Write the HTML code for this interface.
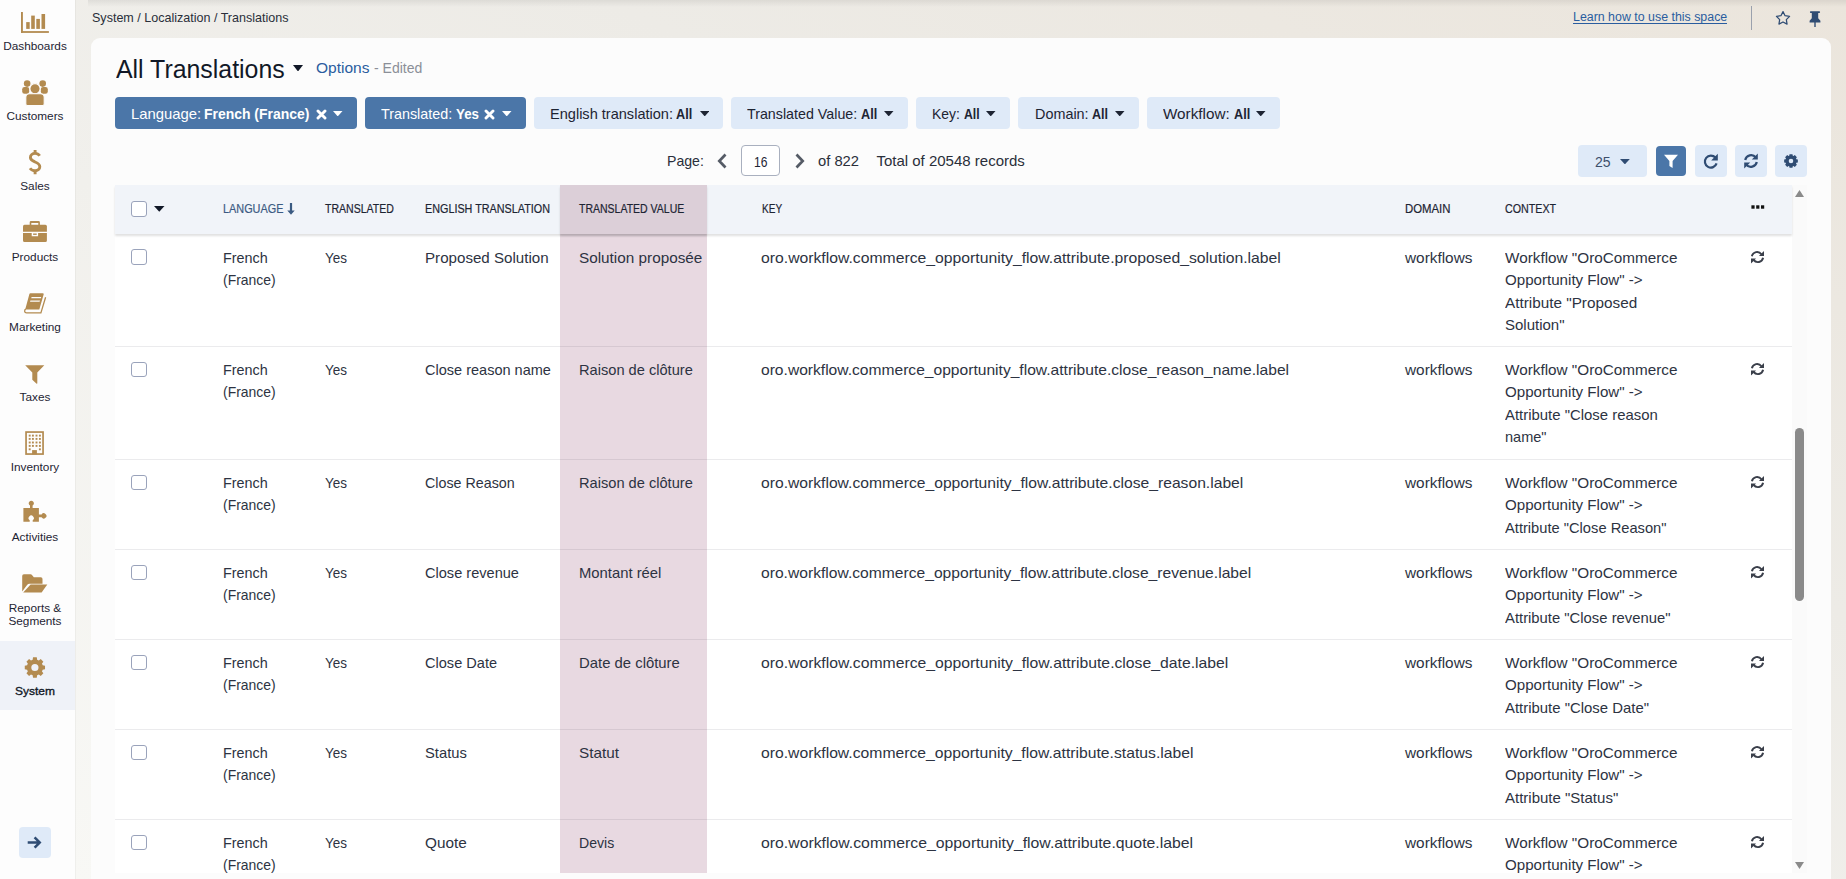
<!DOCTYPE html>
<html><head><meta charset="utf-8">
<style>
*{box-sizing:border-box;margin:0;padding:0}
html,body{width:1846px;height:879px;overflow:hidden}
body{font-family:"Liberation Sans",sans-serif;color:#1d2433;background:#efedea;position:relative}
.abs{position:absolute}
.t{position:absolute;white-space:nowrap;transform-origin:0 0;color:#2d3342}
#side{left:0;top:0;width:75px;height:879px;background:#fdfdfd}
#topbg{left:75px;top:0;width:1771px;height:879px;background:linear-gradient(to bottom left,#ebe5dc 0%,#edebe6 35%,#f1f0ec 60%,#f8f8f5 100%)}
#topshadow{left:88px;top:0;width:1758px;height:7px;background:linear-gradient(180deg,rgba(0,0,0,.07),rgba(0,0,0,0))}
#card{left:91px;top:38px;width:1740px;height:860px;background:#fcfcfc;border-radius:9px}
#thead{left:115px;top:185px;width:1677px;height:48.5px;background:#f1f4f9;box-shadow:0 2px 2px rgba(0,0,0,.12)}

</style></head><body>
<div id="topbg" class="abs"></div><div id="topshadow" class="abs"></div>
<div id="card" class="abs"></div>
<div class="t" style="left:115.60px;top:56.00px;font-size:26px;line-height:26px;transform:scaleX(0.9570);color:#111827">All Translations</div>
<svg class="abs" style="left:293px;top:64.5px" width="10" height="6.5" viewBox="0 0 10 6.5"><path fill="#111827" d="M0 0 H10 L5.0 6.5 Z"/></svg>
<div class="t" style="left:315.50px;top:60.55px;font-size:14.5px;line-height:14.5px;transform:scaleX(1.0710);color:#2a5d9f">Options</div>
<div class="t" style="left:373.50px;top:60.55px;font-size:14.5px;line-height:14.5px;transform:scaleX(0.9669);color:#8b8f98">- Edited</div>
<div class="abs" style="left:115.2px;top:97px;width:241.4px;height:31.6px;border-radius:4px;background:#4b76a8"></div>
<div class="t" style="left:131.20px;top:105.80px;font-size:15px;line-height:15px;transform:scaleX(0.9905);color:#ffffff">Language:</div>
<div class="t" style="left:204.30px;top:105.80px;font-size:15px;line-height:15px;transform:scaleX(0.9292);font-weight:bold;color:#ffffff">French (France)</div>
<svg class="abs" style="left:315.5px;top:108.5px" width="11" height="11" viewBox="0 0 11 11"><path stroke="#fff" stroke-width="2.9" stroke-linecap="round" d="M2 2 L9 9 M9 2 L2 9"/></svg>
<svg class="abs" style="left:333px;top:110.7px" width="9.5" height="5.4" viewBox="0 0 9.5 5.4"><path fill="#ffffff" d="M0 0 H9.5 L4.75 5.4 Z"/></svg>
<div class="abs" style="left:365.1px;top:97px;width:160.7px;height:31.6px;border-radius:4px;background:#4b76a8"></div>
<div class="t" style="left:381.00px;top:105.80px;font-size:15px;line-height:15px;transform:scaleX(0.9547);color:#ffffff">Translated:</div>
<div class="t" style="left:456.00px;top:105.80px;font-size:15px;line-height:15px;transform:scaleX(0.8889);font-weight:bold;color:#ffffff">Yes</div>
<svg class="abs" style="left:483.8px;top:108.5px" width="11" height="11" viewBox="0 0 11 11"><path stroke="#fff" stroke-width="2.9" stroke-linecap="round" d="M2 2 L9 9 M9 2 L2 9"/></svg>
<svg class="abs" style="left:502.4px;top:110.7px" width="9.5" height="5.4" viewBox="0 0 9.5 5.4"><path fill="#ffffff" d="M0 0 H9.5 L4.75 5.4 Z"/></svg>
<div class="abs" style="left:534.1px;top:97px;width:188.7px;height:31.6px;border-radius:4px;background:#dfeaf8"></div>
<div class="t" style="left:550.00px;top:105.80px;font-size:15px;line-height:15px;transform:scaleX(0.9704);color:#1d2433">English translation:</div>
<div class="t" style="left:676.30px;top:105.80px;font-size:15px;line-height:15px;transform:scaleX(0.8438);font-weight:bold;color:#1d2433">All</div>
<svg class="abs" style="left:699.6px;top:110.7px" width="9.5" height="5.4" viewBox="0 0 9.5 5.4"><path fill="#1d2433" d="M0 0 H9.5 L4.75 5.4 Z"/></svg>
<div class="abs" style="left:731px;top:97px;width:176.9px;height:31.6px;border-radius:4px;background:#dfeaf8"></div>
<div class="t" style="left:747.20px;top:105.80px;font-size:15px;line-height:15px;transform:scaleX(0.9510);color:#1d2433">Translated Value:</div>
<div class="t" style="left:861.00px;top:105.80px;font-size:15px;line-height:15px;transform:scaleX(0.8438);font-weight:bold;color:#1d2433">All</div>
<svg class="abs" style="left:884px;top:110.7px" width="9.5" height="5.4" viewBox="0 0 9.5 5.4"><path fill="#1d2433" d="M0 0 H9.5 L4.75 5.4 Z"/></svg>
<div class="abs" style="left:916px;top:97px;width:93.7px;height:31.6px;border-radius:4px;background:#dfeaf8"></div>
<div class="t" style="left:932.20px;top:105.80px;font-size:15px;line-height:15px;transform:scaleX(0.9267);color:#1d2433">Key:</div>
<div class="t" style="left:963.60px;top:105.80px;font-size:15px;line-height:15px;transform:scaleX(0.8177);font-weight:bold;color:#1d2433">All</div>
<svg class="abs" style="left:986.4px;top:110.7px" width="9.5" height="5.4" viewBox="0 0 9.5 5.4"><path fill="#1d2433" d="M0 0 H9.5 L4.75 5.4 Z"/></svg>
<div class="abs" style="left:1018.1px;top:97px;width:120.7px;height:31.6px;border-radius:4px;background:#dfeaf8"></div>
<div class="t" style="left:1034.60px;top:105.80px;font-size:15px;line-height:15px;transform:scaleX(0.9593);color:#1d2433">Domain:</div>
<div class="t" style="left:1092.00px;top:105.80px;font-size:15px;line-height:15px;transform:scaleX(0.8385);font-weight:bold;color:#1d2433">All</div>
<svg class="abs" style="left:1115.2px;top:110.7px" width="9.5" height="5.4" viewBox="0 0 9.5 5.4"><path fill="#1d2433" d="M0 0 H9.5 L4.75 5.4 Z"/></svg>
<div class="abs" style="left:1147.1px;top:97px;width:132.7px;height:31.6px;border-radius:4px;background:#dfeaf8"></div>
<div class="t" style="left:1163.40px;top:105.80px;font-size:15px;line-height:15px;transform:scaleX(1.0160);color:#1d2433">Workflow:</div>
<div class="t" style="left:1233.80px;top:105.80px;font-size:15px;line-height:15px;transform:scaleX(0.8438);font-weight:bold;color:#1d2433">All</div>
<svg class="abs" style="left:1256px;top:110.7px" width="9.5" height="5.4" viewBox="0 0 9.5 5.4"><path fill="#1d2433" d="M0 0 H9.5 L4.75 5.4 Z"/></svg>
<div class="t" style="left:667.30px;top:153.40px;font-size:15px;line-height:15px;transform:scaleX(0.9407);color:#2a2f3a">Page:</div>
<svg class="abs" style="left:715px;top:153px" width="14" height="16" viewBox="0 0 14 16"><path fill="none" stroke="#555b66" stroke-width="2.7" d="M10.5 1.5 l-6.2 6.5 6.2 6.5"/></svg>
<div class="abs" style="left:741.4px;top:145.4px;width:39px;height:31px;border:1px solid #a9b0bf;border-radius:4px;background:#fff"></div>
<div class="t" style="left:754.00px;top:153.60px;font-size:15px;line-height:15px;transform:scaleX(0.8048);color:#1d2433">16</div>
<svg class="abs" style="left:793px;top:153px" width="14" height="16" viewBox="0 0 14 16"><path fill="none" stroke="#555b66" stroke-width="2.7" d="M3.5 1.5 l6.2 6.5 -6.2 6.5"/></svg>
<div class="t" style="left:818.00px;top:153.40px;font-size:15px;line-height:15px;transform:scaleX(0.9832);color:#2a2f3a">of 822</div>
<div class="t" style="left:876.40px;top:153.40px;font-size:15px;line-height:15px;color:#2a2f3a">Total of 20548 records</div>
<div class="abs" style="left:1578.2px;top:145.2px;width:68.5px;height:31.4px;border-radius:4px;background:#dfeaf8"></div>
<div class="t" style="left:1595.40px;top:153.60px;font-size:15px;line-height:15px;transform:scaleX(0.9369);color:#3d4f6b">25</div>
<svg class="abs" style="left:1620px;top:159px" width="9.8" height="5.4" viewBox="0 0 9.8 5.4"><path fill="#2f4c73" d="M0 0 H9.8 L4.9 5.4 Z"/></svg>
<div class="abs" style="left:1656px;top:145.9px;width:30px;height:29.8px;border-radius:4px;background:#4b76a8"></div>
<svg class="abs" style="left:1661px;top:151px" width="20" height="20" viewBox="0 0 20 20"><path fill="#fff" d="M3 3.8 h14 l-5.4 6.2 v7 l-3.2 -2 v-5z"/></svg>
<div class="abs" style="left:1695px;top:145.2px;width:32px;height:31.4px;border-radius:4px;background:#dfeaf8"></div>
<div class="abs" style="left:1735px;top:145.2px;width:32px;height:31.4px;border-radius:4px;background:#dfeaf8"></div>
<div class="abs" style="left:1775px;top:145.2px;width:32px;height:31.4px;border-radius:4px;background:#dfeaf8"></div>
<svg class="abs" style="left:1702px;top:152px" width="18" height="18" viewBox="0 0 18 18"><path fill="none" stroke="#2f4c73" stroke-width="2.2" d="M13.4 5.6 A6 6 0 1 0 14.6 11.4"/><path fill="#2f4c73" d="M15.8 1.8 v6.6 h-6.6z"/></svg>
<svg class="abs" style="left:1742px;top:152px" width="18" height="18" viewBox="0 0 18 18"><path fill="none" stroke="#2f4c73" stroke-width="2.2" d="M3.2 8 A6 6 0 0 1 13.8 5.5 M14.8 10 A6 6 0 0 1 4.2 12.5"/><path fill="#2f4c73" d="M15.8 1.5 v6 h-6z M2.2 16.5 v-6 h6z"/></svg>
<svg class="abs" style="left:1781px;top:151px" width="20" height="20" viewBox="0 0 20 20"><path fill="#2f4c73" fill-rule="evenodd" d="M15.31 8.21 L16.84 8.53 L16.84 11.47 L15.31 11.79 L15.02 12.49 L15.88 13.80 L13.80 15.88 L12.49 15.02 L11.79 15.31 L11.47 16.84 L8.53 16.84 L8.21 15.31 L7.51 15.02 L6.20 15.88 L4.12 13.80 L4.98 12.49 L4.69 11.79 L3.16 11.47 L3.16 8.53 L4.69 8.21 L4.98 7.51 L4.12 6.20 L6.20 4.12 L7.51 4.98 L8.21 4.69 L8.53 3.16 L11.47 3.16 L11.79 4.69 L12.49 4.98 L13.80 4.12 L15.88 6.20 L15.02 7.51 Z M7.70 10.00 a2.30 2.30 0 1 0 4.60 0 a2.30 2.30 0 1 0 -4.60 0 Z"/></svg>
<div class="abs" style="left:115px;top:233.5px;width:1677px;height:639.3px;background:#fff"></div>
<div class="abs" style="left:1792px;top:185px;width:15px;height:688px;background:#fafafa"></div>
<div class="abs" style="left:560px;top:233.5px;width:147px;height:639.3px;background:#e8d9e1"></div>
<div id="thead" class="abs"></div>
<div class="abs" style="left:560px;top:185px;width:147px;height:48.5px;background:#dccfd8;box-shadow:0 2px 2px rgba(0,0,0,.12)"></div>
<div class="abs" style="left:131.2px;top:201.2px;width:15.8px;height:15.6px;border:1.3px solid #9aa3bb;border-radius:3px;background:#fff"></div>
<svg class="abs" style="left:154.4px;top:206.3px" width="10.5" height="5.8" viewBox="0 0 10.5 5.8"><path fill="#111827" d="M0 0 H10.5 L5.25 5.8 Z"/></svg>
<div class="t" style="left:223.40px;top:203.10px;font-size:12.4px;line-height:12.4px;transform:scaleX(0.8769);color:#3b5a82;-webkit-text-stroke:0.2px #3b5a82">LANGUAGE</div>
<div class="t" style="left:325.00px;top:203.10px;font-size:12.4px;line-height:12.4px;transform:scaleX(0.8508);color:#1d2433;-webkit-text-stroke:0.2px #1d2433">TRANSLATED</div>
<div class="t" style="left:425.00px;top:203.10px;font-size:12.4px;line-height:12.4px;transform:scaleX(0.8709);color:#1d2433;-webkit-text-stroke:0.2px #1d2433">ENGLISH TRANSLATION</div>
<div class="t" style="left:578.90px;top:203.10px;font-size:12.4px;line-height:12.4px;transform:scaleX(0.8475);color:#1d2433;-webkit-text-stroke:0.2px #1d2433">TRANSLATED VALUE</div>
<div class="t" style="left:761.60px;top:203.10px;font-size:12.4px;line-height:12.4px;transform:scaleX(0.8105);color:#1d2433;-webkit-text-stroke:0.2px #1d2433">KEY</div>
<div class="t" style="left:1404.80px;top:203.10px;font-size:12.4px;line-height:12.4px;transform:scaleX(0.9173);color:#1d2433;-webkit-text-stroke:0.2px #1d2433">DOMAIN</div>
<div class="t" style="left:1504.90px;top:203.10px;font-size:12.4px;line-height:12.4px;transform:scaleX(0.8638);color:#1d2433;-webkit-text-stroke:0.2px #1d2433">CONTEXT</div>
<svg class="abs" style="left:286.5px;top:203px" width="8" height="12" viewBox="0 0 8 12"><path fill="#3b5a82" d="M2.9 0 h2.2 v7.5 h2.6 l-3.7 4.3 -3.7 -4.3 h2.6z"/></svg>
<svg class="abs" style="left:1750px;top:204px" width="16" height="7" viewBox="0 0 16 7"><g fill="#111"><rect x="1.4" y="1.3" width="3.2" height="3.4"/><rect x="6.2" y="1.3" width="3.2" height="3.4"/><rect x="11" y="1.3" width="3.2" height="3.4"/></g></svg>
<div class="abs" style="left:115px;top:346px;width:1677px;height:1px;background:rgba(40,40,60,.095)"></div>
<div class="abs" style="left:131.2px;top:249.1px;width:15.6px;height:15.6px;border:1.3px solid #9aa3bb;border-radius:3px;background:#fff"></div>
<div class="t" style="left:223.30px;top:249.90px;font-size:15px;line-height:15px;transform:scaleX(0.9582)">French</div>
<div class="t" style="left:223.30px;top:272.30px;font-size:15px;line-height:15px;transform:scaleX(0.9295)">(France)</div>
<div class="t" style="left:325.30px;top:249.90px;font-size:15px;line-height:15px;transform:scaleX(0.8998)">Yes</div>
<div class="t" style="left:425.30px;top:249.90px;font-size:15px;line-height:15px;transform:scaleX(1.0088)">Proposed Solution</div>
<div class="t" style="left:578.70px;top:249.90px;font-size:15px;line-height:15px;transform:scaleX(1.0199)">Solution proposée</div>
<div class="t" style="left:761.20px;top:249.90px;font-size:15px;line-height:15px;transform:scaleX(1.0495)">oro.workflow.commerce_opportunity_flow.attribute.proposed_solution.label</div>
<div class="t" style="left:1405.18px;top:249.90px;font-size:15px;line-height:15px;transform:scaleX(1.0239)">workflows</div>
<div class="t" style="left:1505.00px;top:249.90px;font-size:15px;line-height:15px;transform:scaleX(1.0191)">Workflow "OroCommerce</div>
<div class="t" style="left:1505.00px;top:272.30px;font-size:15px;line-height:15px;transform:scaleX(1.0077)">Opportunity Flow" -&gt;</div>
<div class="t" style="left:1505.00px;top:294.70px;font-size:15px;line-height:15px;transform:scaleX(1.0201)">Attribute "Proposed</div>
<div class="t" style="left:1505.00px;top:317.10px;font-size:15px;line-height:15px">Solution"</div>
<svg class="abs" style="left:1749px;top:248.5px" width="17" height="17" viewBox="0 0 17 17"><path fill="none" stroke="#3a3f4a" stroke-width="1.9" d="M2.9 7.3 A5.3 5.3 0 0 1 12.4 5.2 M14.1 8.8 A5.3 5.3 0 0 1 4.6 10.9"/><path fill="#3a3f4a" d="M15 1.9 V6.9 H10 L11.4 5.5z M2 14.5 V9.5 H7 L5.6 10.9z"/></svg>
<div class="abs" style="left:115px;top:459px;width:1677px;height:1px;background:rgba(40,40,60,.095)"></div>
<div class="abs" style="left:131.2px;top:361.6px;width:15.6px;height:15.6px;border:1.3px solid #9aa3bb;border-radius:3px;background:#fff"></div>
<div class="t" style="left:223.30px;top:361.70px;font-size:15px;line-height:15px;transform:scaleX(0.9582)">French</div>
<div class="t" style="left:223.30px;top:384.10px;font-size:15px;line-height:15px;transform:scaleX(0.9295)">(France)</div>
<div class="t" style="left:325.30px;top:361.70px;font-size:15px;line-height:15px;transform:scaleX(0.8998)">Yes</div>
<div class="t" style="left:425.30px;top:361.70px;font-size:15px;line-height:15px;transform:scaleX(0.9681)">Close reason name</div>
<div class="t" style="left:578.70px;top:361.70px;font-size:15px;line-height:15px;transform:scaleX(0.9751)">Raison de clôture</div>
<div class="t" style="left:761.20px;top:361.70px;font-size:15px;line-height:15px;transform:scaleX(1.0399)">oro.workflow.commerce_opportunity_flow.attribute.close_reason_name.label</div>
<div class="t" style="left:1405.18px;top:361.70px;font-size:15px;line-height:15px;transform:scaleX(1.0239)">workflows</div>
<div class="t" style="left:1505.00px;top:361.70px;font-size:15px;line-height:15px;transform:scaleX(1.0191)">Workflow "OroCommerce</div>
<div class="t" style="left:1505.00px;top:384.10px;font-size:15px;line-height:15px;transform:scaleX(1.0077)">Opportunity Flow" -&gt;</div>
<div class="t" style="left:1505.00px;top:406.50px;font-size:15px;line-height:15px;transform:scaleX(0.9938)">Attribute "Close reason</div>
<div class="t" style="left:1505.00px;top:428.90px;font-size:15px;line-height:15px;transform:scaleX(0.9691)">name"</div>
<svg class="abs" style="left:1749px;top:361px" width="17" height="17" viewBox="0 0 17 17"><path fill="none" stroke="#3a3f4a" stroke-width="1.9" d="M2.9 7.3 A5.3 5.3 0 0 1 12.4 5.2 M14.1 8.8 A5.3 5.3 0 0 1 4.6 10.9"/><path fill="#3a3f4a" d="M15 1.9 V6.9 H10 L11.4 5.5z M2 14.5 V9.5 H7 L5.6 10.9z"/></svg>
<div class="abs" style="left:115px;top:549px;width:1677px;height:1px;background:rgba(40,40,60,.095)"></div>
<div class="abs" style="left:131.2px;top:474.6px;width:15.6px;height:15.6px;border:1.3px solid #9aa3bb;border-radius:3px;background:#fff"></div>
<div class="t" style="left:223.30px;top:474.70px;font-size:15px;line-height:15px;transform:scaleX(0.9582)">French</div>
<div class="t" style="left:223.30px;top:497.10px;font-size:15px;line-height:15px;transform:scaleX(0.9295)">(France)</div>
<div class="t" style="left:325.30px;top:474.70px;font-size:15px;line-height:15px;transform:scaleX(0.8998)">Yes</div>
<div class="t" style="left:425.30px;top:474.70px;font-size:15px;line-height:15px;transform:scaleX(0.9522)">Close Reason</div>
<div class="t" style="left:578.70px;top:474.70px;font-size:15px;line-height:15px;transform:scaleX(0.9751)">Raison de clôture</div>
<div class="t" style="left:761.20px;top:474.70px;font-size:15px;line-height:15px;transform:scaleX(1.0441)">oro.workflow.commerce_opportunity_flow.attribute.close_reason.label</div>
<div class="t" style="left:1405.18px;top:474.70px;font-size:15px;line-height:15px;transform:scaleX(1.0239)">workflows</div>
<div class="t" style="left:1505.00px;top:474.70px;font-size:15px;line-height:15px;transform:scaleX(1.0191)">Workflow "OroCommerce</div>
<div class="t" style="left:1505.00px;top:497.10px;font-size:15px;line-height:15px;transform:scaleX(1.0077)">Opportunity Flow" -&gt;</div>
<div class="t" style="left:1505.00px;top:519.50px;font-size:15px;line-height:15px;transform:scaleX(0.9792)">Attribute "Close Reason"</div>
<svg class="abs" style="left:1749px;top:474px" width="17" height="17" viewBox="0 0 17 17"><path fill="none" stroke="#3a3f4a" stroke-width="1.9" d="M2.9 7.3 A5.3 5.3 0 0 1 12.4 5.2 M14.1 8.8 A5.3 5.3 0 0 1 4.6 10.9"/><path fill="#3a3f4a" d="M15 1.9 V6.9 H10 L11.4 5.5z M2 14.5 V9.5 H7 L5.6 10.9z"/></svg>
<div class="abs" style="left:115px;top:639px;width:1677px;height:1px;background:rgba(40,40,60,.095)"></div>
<div class="abs" style="left:131.2px;top:564.6px;width:15.6px;height:15.6px;border:1.3px solid #9aa3bb;border-radius:3px;background:#fff"></div>
<div class="t" style="left:223.30px;top:564.70px;font-size:15px;line-height:15px;transform:scaleX(0.9582)">French</div>
<div class="t" style="left:223.30px;top:587.10px;font-size:15px;line-height:15px;transform:scaleX(0.9295)">(France)</div>
<div class="t" style="left:325.30px;top:564.70px;font-size:15px;line-height:15px;transform:scaleX(0.8998)">Yes</div>
<div class="t" style="left:425.30px;top:564.70px;font-size:15px;line-height:15px;transform:scaleX(0.9716)">Close revenue</div>
<div class="t" style="left:578.70px;top:564.70px;font-size:15px;line-height:15px;transform:scaleX(0.9880)">Montant réel</div>
<div class="t" style="left:761.20px;top:564.70px;font-size:15px;line-height:15px;transform:scaleX(1.0424)">oro.workflow.commerce_opportunity_flow.attribute.close_revenue.label</div>
<div class="t" style="left:1405.18px;top:564.70px;font-size:15px;line-height:15px;transform:scaleX(1.0239)">workflows</div>
<div class="t" style="left:1505.00px;top:564.70px;font-size:15px;line-height:15px;transform:scaleX(1.0191)">Workflow "OroCommerce</div>
<div class="t" style="left:1505.00px;top:587.10px;font-size:15px;line-height:15px;transform:scaleX(1.0077)">Opportunity Flow" -&gt;</div>
<div class="t" style="left:1505.00px;top:609.50px;font-size:15px;line-height:15px;transform:scaleX(0.9886)">Attribute "Close revenue"</div>
<svg class="abs" style="left:1749px;top:564px" width="17" height="17" viewBox="0 0 17 17"><path fill="none" stroke="#3a3f4a" stroke-width="1.9" d="M2.9 7.3 A5.3 5.3 0 0 1 12.4 5.2 M14.1 8.8 A5.3 5.3 0 0 1 4.6 10.9"/><path fill="#3a3f4a" d="M15 1.9 V6.9 H10 L11.4 5.5z M2 14.5 V9.5 H7 L5.6 10.9z"/></svg>
<div class="abs" style="left:115px;top:729px;width:1677px;height:1px;background:rgba(40,40,60,.095)"></div>
<div class="abs" style="left:131.2px;top:654.6px;width:15.6px;height:15.6px;border:1.3px solid #9aa3bb;border-radius:3px;background:#fff"></div>
<div class="t" style="left:223.30px;top:654.70px;font-size:15px;line-height:15px;transform:scaleX(0.9582)">French</div>
<div class="t" style="left:223.30px;top:677.10px;font-size:15px;line-height:15px;transform:scaleX(0.9295)">(France)</div>
<div class="t" style="left:325.30px;top:654.70px;font-size:15px;line-height:15px;transform:scaleX(0.8998)">Yes</div>
<div class="t" style="left:425.30px;top:654.70px;font-size:15px;line-height:15px;transform:scaleX(0.9707)">Close Date</div>
<div class="t" style="left:578.70px;top:654.70px;font-size:15px;line-height:15px;transform:scaleX(0.9912)">Date de clôture</div>
<div class="t" style="left:761.20px;top:654.70px;font-size:15px;line-height:15px;transform:scaleX(1.0495)">oro.workflow.commerce_opportunity_flow.attribute.close_date.label</div>
<div class="t" style="left:1405.18px;top:654.70px;font-size:15px;line-height:15px;transform:scaleX(1.0239)">workflows</div>
<div class="t" style="left:1505.00px;top:654.70px;font-size:15px;line-height:15px;transform:scaleX(1.0191)">Workflow "OroCommerce</div>
<div class="t" style="left:1505.00px;top:677.10px;font-size:15px;line-height:15px;transform:scaleX(1.0077)">Opportunity Flow" -&gt;</div>
<div class="t" style="left:1505.00px;top:699.50px;font-size:15px;line-height:15px;transform:scaleX(0.9938)">Attribute "Close Date"</div>
<svg class="abs" style="left:1749px;top:654px" width="17" height="17" viewBox="0 0 17 17"><path fill="none" stroke="#3a3f4a" stroke-width="1.9" d="M2.9 7.3 A5.3 5.3 0 0 1 12.4 5.2 M14.1 8.8 A5.3 5.3 0 0 1 4.6 10.9"/><path fill="#3a3f4a" d="M15 1.9 V6.9 H10 L11.4 5.5z M2 14.5 V9.5 H7 L5.6 10.9z"/></svg>
<div class="abs" style="left:115px;top:819px;width:1677px;height:1px;background:rgba(40,40,60,.095)"></div>
<div class="abs" style="left:131.2px;top:744.6px;width:15.6px;height:15.6px;border:1.3px solid #9aa3bb;border-radius:3px;background:#fff"></div>
<div class="t" style="left:223.30px;top:744.70px;font-size:15px;line-height:15px;transform:scaleX(0.9582)">French</div>
<div class="t" style="left:223.30px;top:767.10px;font-size:15px;line-height:15px;transform:scaleX(0.9295)">(France)</div>
<div class="t" style="left:325.30px;top:744.70px;font-size:15px;line-height:15px;transform:scaleX(0.8998)">Yes</div>
<div class="t" style="left:425.30px;top:744.70px;font-size:15px;line-height:15px;transform:scaleX(0.9830)">Status</div>
<div class="t" style="left:578.70px;top:744.70px;font-size:15px;line-height:15px;transform:scaleX(1.0198)">Statut</div>
<div class="t" style="left:761.20px;top:744.70px;font-size:15px;line-height:15px;transform:scaleX(1.0479)">oro.workflow.commerce_opportunity_flow.attribute.status.label</div>
<div class="t" style="left:1405.18px;top:744.70px;font-size:15px;line-height:15px;transform:scaleX(1.0239)">workflows</div>
<div class="t" style="left:1505.00px;top:744.70px;font-size:15px;line-height:15px;transform:scaleX(1.0191)">Workflow "OroCommerce</div>
<div class="t" style="left:1505.00px;top:767.10px;font-size:15px;line-height:15px;transform:scaleX(1.0077)">Opportunity Flow" -&gt;</div>
<div class="t" style="left:1505.00px;top:789.50px;font-size:15px;line-height:15px">Attribute "Status"</div>
<svg class="abs" style="left:1749px;top:744px" width="17" height="17" viewBox="0 0 17 17"><path fill="none" stroke="#3a3f4a" stroke-width="1.9" d="M2.9 7.3 A5.3 5.3 0 0 1 12.4 5.2 M14.1 8.8 A5.3 5.3 0 0 1 4.6 10.9"/><path fill="#3a3f4a" d="M15 1.9 V6.9 H10 L11.4 5.5z M2 14.5 V9.5 H7 L5.6 10.9z"/></svg>
<div class="abs" style="left:115px;top:909px;width:1677px;height:1px;background:rgba(40,40,60,.095)"></div>
<div class="abs" style="left:131.2px;top:834.6px;width:15.6px;height:15.6px;border:1.3px solid #9aa3bb;border-radius:3px;background:#fff"></div>
<div class="t" style="left:223.30px;top:834.70px;font-size:15px;line-height:15px;transform:scaleX(0.9582)">French</div>
<div class="t" style="left:223.30px;top:857.10px;font-size:15px;line-height:15px;transform:scaleX(0.9295)">(France)</div>
<div class="t" style="left:325.30px;top:834.70px;font-size:15px;line-height:15px;transform:scaleX(0.8998)">Yes</div>
<div class="t" style="left:425.30px;top:834.70px;font-size:15px;line-height:15px;transform:scaleX(1.0226)">Quote</div>
<div class="t" style="left:578.70px;top:834.70px;font-size:15px;line-height:15px;transform:scaleX(0.9413)">Devis</div>
<div class="t" style="left:761.20px;top:834.70px;font-size:15px;line-height:15px;transform:scaleX(1.0533)">oro.workflow.commerce_opportunity_flow.attribute.quote.label</div>
<div class="t" style="left:1405.18px;top:834.70px;font-size:15px;line-height:15px;transform:scaleX(1.0239)">workflows</div>
<div class="t" style="left:1505.00px;top:834.70px;font-size:15px;line-height:15px;transform:scaleX(1.0191)">Workflow "OroCommerce</div>
<div class="t" style="left:1505.00px;top:857.10px;font-size:15px;line-height:15px;transform:scaleX(1.0077)">Opportunity Flow" -&gt;</div>
<div class="t" style="left:1505.00px;top:879.50px;font-size:15px;line-height:15px;transform:scaleX(1.0760)">Attribute "Quote"</div>
<svg class="abs" style="left:1749px;top:834px" width="17" height="17" viewBox="0 0 17 17"><path fill="none" stroke="#3a3f4a" stroke-width="1.9" d="M2.9 7.3 A5.3 5.3 0 0 1 12.4 5.2 M14.1 8.8 A5.3 5.3 0 0 1 4.6 10.9"/><path fill="#3a3f4a" d="M15 1.9 V6.9 H10 L11.4 5.5z M2 14.5 V9.5 H7 L5.6 10.9z"/></svg>
<svg class="abs" style="left:1795px;top:189.5px" width="9" height="7" viewBox="0 0 9 7"><path fill="#8a8a8a" d="M0 7 H9 L4.5 0z"/></svg>
<div class="abs" style="left:1795px;top:428px;width:9px;height:173px;border-radius:4.5px;background:#8a8a8a"></div>
<svg class="abs" style="left:1795px;top:862px" width="9" height="7" viewBox="0 0 9 7"><path fill="#8a8a8a" d="M0 0 H9 L4.5 7z"/></svg>
<div id="side" class="abs"><div class="abs" style="left:0px;top:641px;width:75px;height:69.4px;background:#eff2f8"></div><div class="abs" style="left:75px;top:0px;width:1px;height:879px;background:rgba(0,0,0,.035)"></div><svg class="abs" style="left:15px;top:5px" width="40" height="35" viewBox="0 0 40 35"><g fill="#b38b50"><rect x="6" y="7" width="1.9" height="20.9"/><rect x="6" y="26.1" width="27.9" height="1.8"/><rect x="11.2" y="17.1" width="3.5" height="6.8"/><rect x="16.2" y="10.6" width="3.6" height="13.3"/><rect x="21.3" y="13.9" width="3.6" height="10"/><rect x="26.5" y="9" width="3.6" height="14.9"/></g></svg><svg class="abs" style="left:15px;top:75px" width="40" height="35" viewBox="0 0 40 35"><g fill="#b38b50"><circle cx="12.15" cy="8.6" r="3.3"/><circle cx="27.7" cy="8.6" r="3.3"/><rect x="7.2" y="12" width="7" height="6.8" rx="2.3"/><rect x="25.8" y="12" width="7" height="6.8" rx="2.3"/></g><g fill="#b38b50" stroke="#fcfcfc" stroke-width="1.1"><circle cx="20" cy="13.7" r="5.1"/><path d="M10.8 29 v-6.5 a3.8 3.8 0 0 1 3.8 -3.8 h10.8 a3.8 3.8 0 0 1 3.8 3.8 v6.5 a1.6 1.6 0 0 1 -1.6 1.6 h-15.2 a1.6 1.6 0 0 1 -1.6 -1.6z"/></g></svg><svg class="abs" style="left:15px;top:145px" width="40" height="35" viewBox="0 0 40 35"><g fill="none" stroke="#b38b50" stroke-width="2.9"><path d="M24.7 10.8 C23.6 9.2 22 8.4 20.1 8.4 C17.4 8.4 15.4 10 15.4 12.4 C15.4 15 17.8 16 20.1 17 C22.6 18 24.8 19.2 24.8 21.8 C24.8 24.2 22.6 25.7 20.1 25.7 C17.9 25.7 16.1 24.8 15 23.2"/><path d="M20.1 5 V8.6 M20.1 25.4 V29.3"/></g></svg><svg class="abs" style="left:15px;top:215px" width="40" height="35" viewBox="0 0 40 35"><g fill="#b38b50"><path fill-rule="evenodd" d="M14.7 7.3 a1.3 1.3 0 0 1 1.3 -1.3 h7.6 a1.3 1.3 0 0 1 1.3 1.3 v2.7 h-1.6 v-2 h-7 v2 h-1.6z"/><path d="M8 11.3 a1.5 1.5 0 0 1 1.5 -1.5 h20.9 a1.5 1.5 0 0 1 1.5 1.5 v5.4 h-23.9z"/><path d="M8 18.1 h8.7 v3.2 h6.4 v-3.2 h8.8 v7.3 a1.5 1.5 0 0 1 -1.5 1.5 h-20.9 a1.5 1.5 0 0 1 -1.5 -1.5z"/><rect x="18.1" y="18.5" width="3.6" height="1.4"/></g></svg><svg class="abs" style="left:15px;top:285px" width="40" height="35" viewBox="0 0 40 35"><g fill="#b38b50"><path d="M15.5 8.2 H27.6 a1.1 1.1 0 0 1 1.05 1.4 L24.3 24.5 H10.2 L14.4 9 a1.1 1.1 0 0 1 1.1 -0.8z"/></g><path fill="none" stroke="#b38b50" stroke-width="1.3" d="M10.8 24.2 C9.2 25 9.1 27.9 11.6 27.9 H25.9 L30.6 12.3"/><g fill="#fcfcfc"><rect x="16.3" y="12" width="9.6" height="1.2" transform="skewX(-15) translate(3.5 0)"/><rect x="15.3" y="15.4" width="9.6" height="1.3" transform="skewX(-15) translate(4.2 0)"/></g></svg><svg class="abs" style="left:15px;top:355px" width="40" height="35" viewBox="0 0 40 35"><path fill="#b38b50" d="M10.2 10.2 H29.3 L22.3 17.5 V28.4 L21.6 28.7 L17.3 24.7 V17.5 Z"/></svg><svg class="abs" style="left:15px;top:425px" width="40" height="35" viewBox="0 0 40 35"><rect x="11.05" y="7.05" width="17" height="22" fill="none" stroke="#b38b50" stroke-width="1.7"/><g fill="#b38b50"><rect x="13.75" y="9.65" width="1.9" height="1.9"/><rect x="16.95" y="9.65" width="1.9" height="1.9"/><rect x="20.55" y="9.65" width="1.9" height="1.9"/><rect x="23.95" y="9.65" width="1.9" height="1.9"/><rect x="13.75" y="12.95" width="1.9" height="1.9"/><rect x="16.95" y="12.95" width="1.9" height="1.9"/><rect x="20.55" y="12.95" width="1.9" height="1.9"/><rect x="23.95" y="12.95" width="1.9" height="1.9"/><rect x="13.75" y="16.55" width="1.9" height="1.9"/><rect x="16.95" y="16.55" width="1.9" height="1.9"/><rect x="20.55" y="16.55" width="1.9" height="1.9"/><rect x="23.95" y="16.55" width="1.9" height="1.9"/><rect x="13.75" y="19.95" width="1.9" height="1.9"/><rect x="16.95" y="19.95" width="1.9" height="1.9"/><rect x="20.55" y="19.95" width="1.9" height="1.9"/><rect x="23.95" y="19.95" width="1.9" height="1.9"/><rect x="13.75" y="23.35" width="1.9" height="1.9"/><rect x="23.95" y="23.35" width="1.9" height="1.9"/><rect x="17.1" y="25.1" width="4.8" height="4.3"/></g></svg><svg class="abs" style="left:15px;top:495px" width="40" height="35" viewBox="0 0 40 35"><path fill="#b38b50" d="M8.4 13.1 H15 V10.6 A2.6 2.6 0 1 1 17.6 10.6 V13.1 H23.9 V19.5 H26.6 A2.6 2.6 0 1 1 26.6 22.3 H23.9 V26.7 H17.7 V25.3 A2.6 2.6 0 1 0 14.7 25.3 V26.7 H8.4 Z"/></svg><svg class="abs" style="left:15px;top:565px" width="40" height="35" viewBox="0 0 40 35"><g fill="#b38b50"><path d="M7.2 10.9 a1.7 1.7 0 0 1 1.7 -1.7 h6.8 a1.5 1.5 0 0 1 1.1 0.5 l2 2.5 h7 a1.7 1.7 0 0 1 1.7 1.7 v4.9 h-13 a3 3 0 0 0 -2.4 1.3 l-4.9 6.5z"/><path d="M15.6 19.5 H32.3 L26.6 27.5 H8.2 Z"/></g></svg><svg class="abs" style="left:15px;top:650px" width="40" height="35" viewBox="0 0 40 35"><path fill="#b38b50" fill-rule="evenodd" d="M27.68 15.26 L30.03 15.63 L30.03 19.37 L27.68 19.74 L26.99 21.42 L28.38 23.34 L25.74 25.98 L23.82 24.59 L22.14 25.28 L21.77 27.63 L18.03 27.63 L17.66 25.28 L15.98 24.59 L14.06 25.98 L11.42 23.34 L12.81 21.42 L12.12 19.74 L9.77 19.37 L9.77 15.63 L12.12 15.26 L12.81 13.58 L11.42 11.66 L14.06 9.02 L15.98 10.41 L17.66 9.72 L18.03 7.37 L21.77 7.37 L22.14 9.72 L23.82 10.41 L25.74 9.02 L28.38 11.66 L26.99 13.58 Z M16.30 17.50 a3.60 3.60 0 1 0 7.20 0 a3.60 3.60 0 1 0 -7.20 0 Z"/></svg><div class="t" style="left:3.20px;top:41.00px;font-size:11.8px;line-height:11.8px;color:#1d2433">Dashboards</div><div class="t" style="left:6.47px;top:111.00px;font-size:11.8px;line-height:11.8px;color:#1d2433">Customers</div><div class="t" style="left:20.25px;top:181.00px;font-size:11.8px;line-height:11.8px;color:#1d2433">Sales</div><div class="t" style="left:11.72px;top:251.60px;font-size:11.8px;line-height:11.8px;color:#1d2433">Products</div><div class="t" style="left:9.10px;top:322.00px;font-size:11.8px;line-height:11.8px;color:#1d2433">Marketing</div><div class="t" style="left:19.60px;top:391.50px;font-size:11.8px;line-height:11.8px;color:#1d2433">Taxes</div><div class="t" style="left:10.72px;top:461.60px;font-size:11.8px;line-height:11.8px;color:#1d2433">Inventory</div><div class="t" style="left:11.72px;top:531.70px;font-size:11.8px;line-height:11.8px;color:#1d2433">Activities</div><div class="t" style="left:8.77px;top:602.90px;font-size:11.8px;line-height:11.8px;color:#1d2433">Reports &amp;</div><div class="t" style="left:8.42px;top:615.60px;font-size:11.8px;line-height:11.8px;color:#1d2433">Segments</div><div class="t" style="left:15.32px;top:686.00px;font-size:11.8px;line-height:11.8px;transform:scaleX(1.0152);color:#111827;-webkit-text-stroke:0.35px #111827">System</div><div class="abs" style="left:19px;top:827.3px;width:32px;height:31.2px;border-radius:4px;background:#dfeaf8"></div><svg class="abs" style="left:26px;top:834px" width="17" height="17" viewBox="0 0 17 17"><path fill="#2f4c73" d="M9.5 2.5 l6 6 -6 6 -1.8 -1.8 3 -3 h-9 v-2.4 h9 l-3 -3z"/></svg></div>
<div class="t" style="left:91.60px;top:11.10px;font-size:13px;line-height:13px;transform:scaleX(0.9643);color:#2a2f3a">System / Localization / Translations</div>
<div class="t" style="left:1572.80px;top:11.35px;font-size:12.5px;line-height:12.5px;transform:scaleX(0.9908);color:#2a5d9f">Learn how to use this space</div>
<div class="abs" style="left:1572.8px;top:23.2px;width:154.2px;height:1px;background:#2a5d9f"></div>
<div class="abs" style="left:1751px;top:6px;width:1px;height:24px;background:#9aa1ad"></div>
<svg class="abs" style="left:1774px;top:9px" width="18" height="17" viewBox="0 0 18 17"><path fill="none" stroke="#2f4c73" stroke-width="1.25" stroke-linejoin="round" d="M9.00 2.60 L11.06 6.67 L15.56 7.37 L12.33 10.58 L13.06 15.08 L9.00 13.00 L4.94 15.08 L5.67 10.58 L2.44 7.37 L6.94 6.67Z"/></svg>
<svg class="abs" style="left:1808px;top:10px" width="14" height="17" viewBox="0 0 14 17"><path fill="#2f4c73" d="M2.8 1.2 h8.4 a0.9 0.9 0 0 1 0 1.8 h-1 v5.2 l2.2 2.6 v1.6 h-4.7 v4.6 l-0.7 0.9 -0.7 -0.9 v-4.6 h-4.7 v-1.6 l2.2 -2.6 v-5.2 h-1 a0.9 0.9 0 0 1 0 -1.8z"/></svg>
</body></html>
